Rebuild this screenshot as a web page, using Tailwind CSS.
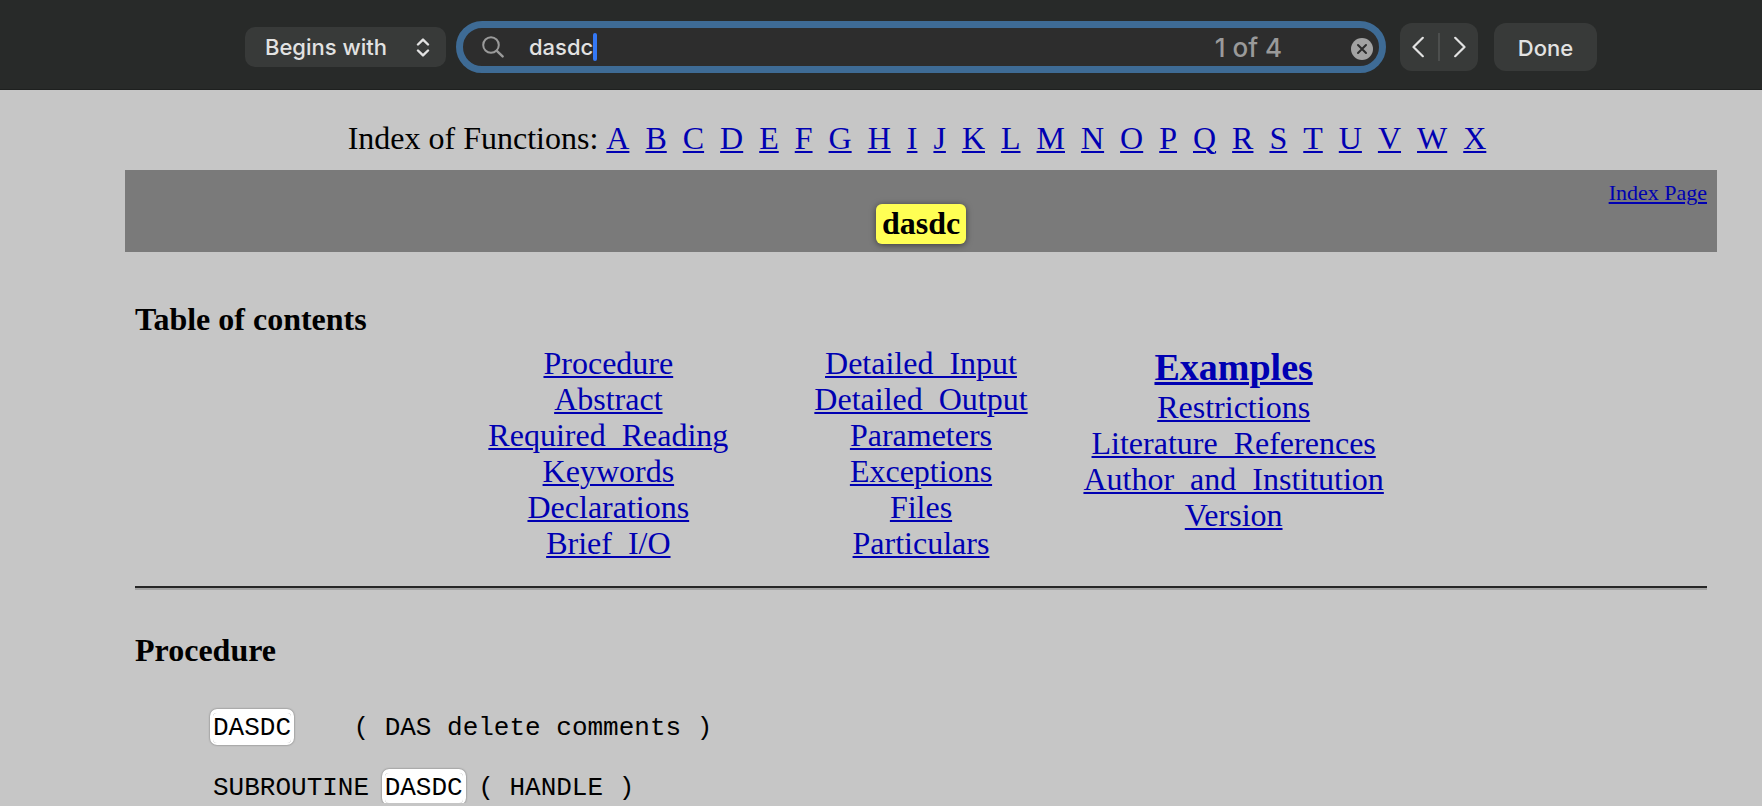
<!DOCTYPE html>
<html lang="en">
<head>
    <meta charset="UTF-8">
    <meta name="viewport" content="width=device-width, initial-scale=1.0">
    <title>dasdc</title>
    <!-- Tailwind CSS -->
    <script src="https://cdn.jsdelivr.net/npm/@tailwindcss/browser@4"></script>
</head>
<body class="bg-[#c6c6c6] text-black font-['Liberation_Serif',serif] text-[32px] leading-9 overflow-x-hidden">

    <!-- Find bar -->
    <header class="flex items-center h-[90px] pl-[245px] pr-[165px] pt-[5px] bg-[#282a29] border-b border-[#1e201f] font-[Inter,sans-serif] font-medium text-[22px] leading-7 text-[#e2e2e2]">
        <div class="relative w-[201px] h-10 mr-[10px]">
            <select aria-label="Match mode" class="appearance-none w-full h-full pl-5 rounded-[10px] bg-[#383a39]">
                <option>Begins with</option>
                <option>Contains</option>
            </select>
            <svg class="absolute right-4 top-[11px] w-[14px] h-[19px] pointer-events-none" viewBox="0 0 14 19" fill="none" stroke="#e2e2e2" stroke-width="2.4" stroke-linecap="round" stroke-linejoin="round">
                <path d="M2 6.5 7 1.6l5 4.9M2 12.5l5 4.9 5-4.9"/>
            </svg>
        </div>

        <div class="flex flex-1 items-center h-[52px] mr-[14px] pl-[19px] pr-[6px] rounded-full border-[7px] border-[#3e6b95] bg-[#2d2d2d]">
            <svg class="w-[22px] h-[22px] shrink-0" viewBox="0 0 22 22" fill="none" stroke="#9a9a9a" stroke-width="2" stroke-linecap="round">
                <circle cx="9" cy="9" r="7.8"/>
                <path d="m14.8 14.8 5.8 5.6" stroke-width="2.4"/>
            </svg>
            <input type="text" value="dasdc" aria-label="Find on page" class="field-sizing-content ml-[25px] bg-transparent outline-none">
            <span class="w-1 h-7 rounded-xs bg-[#3478f6]"></span>
            <span class="ml-auto pt-[2px] text-[26px] text-[#9a9a9a]">1 of 4</span>
            <button type="button" aria-label="Clear" class="ml-[69px] mt-1">
                <svg class="block w-[22px] h-[22px]" viewBox="0 0 22 22">
                    <circle cx="11" cy="11" r="11" fill="#a2a2a2"/>
                    <path d="m7 7 8 8m0-8-8 8" stroke="#2d2d2d" stroke-width="2" stroke-linecap="round"/>
                </svg>
            </button>
        </div>

        <div class="flex items-center w-[78px] h-12 mr-4 rounded-[12px] bg-[#383a39]">
            <button type="button" aria-label="Previous" class="flex flex-1 h-full items-center justify-start pl-3">
                <svg class="w-3 h-[22px]" viewBox="0 0 12 22" fill="none" stroke="#e2e2e2" stroke-width="2.2" stroke-linecap="round" stroke-linejoin="round"><path d="M10.8 1.8 1.5 11l9.3 9.2"/></svg>
            </button>
            <span class="w-[2px] h-7 bg-[#4d4f4e]"></span>
            <button type="button" aria-label="Next" class="flex flex-1 h-full items-center justify-end pr-3">
                <svg class="w-3 h-[22px]" viewBox="0 0 12 22" fill="none" stroke="#e2e2e2" stroke-width="2.2" stroke-linecap="round" stroke-linejoin="round"><path d="m1.2 1.8 9.3 9.2-9.3 9.2"/></svg>
            </button>
        </div>
        <button type="button" class="w-[103px] h-12 pt-[2px] rounded-[12px] bg-[#383a39]">Done</button>
    </header>

    <main class="pl-[125px] pr-[45px] pt-[30px]">
        <!-- Alphabetical index -->
        <p class="text-center whitespace-nowrap mb-[14px] [font-kerning:none]">Index of Functions:
            <a href="#" class="text-[#0000b2] underline decoration-2 underline-offset-2">A</a>&nbsp;
            <a href="#" class="text-[#0000b2] underline decoration-2 underline-offset-2">B</a>&nbsp;
            <a href="#" class="text-[#0000b2] underline decoration-2 underline-offset-2">C</a>&nbsp;
            <a href="#" class="text-[#0000b2] underline decoration-2 underline-offset-2">D</a>&nbsp;
            <a href="#" class="text-[#0000b2] underline decoration-2 underline-offset-2">E</a>&nbsp;
            <a href="#" class="text-[#0000b2] underline decoration-2 underline-offset-2">F</a>&nbsp;
            <a href="#" class="text-[#0000b2] underline decoration-2 underline-offset-2">G</a>&nbsp;
            <a href="#" class="text-[#0000b2] underline decoration-2 underline-offset-2">H</a>&nbsp;
            <a href="#" class="text-[#0000b2] underline decoration-2 underline-offset-2">I</a>&nbsp;
            <a href="#" class="text-[#0000b2] underline decoration-2 underline-offset-2">J</a>&nbsp;
            <a href="#" class="text-[#0000b2] underline decoration-2 underline-offset-2">K</a>&nbsp;
            <a href="#" class="text-[#0000b2] underline decoration-2 underline-offset-2">L</a>&nbsp;
            <a href="#" class="text-[#0000b2] underline decoration-2 underline-offset-2">M</a>&nbsp;
            <a href="#" class="text-[#0000b2] underline decoration-2 underline-offset-2">N</a>&nbsp;
            <a href="#" class="text-[#0000b2] underline decoration-2 underline-offset-2">O</a>&nbsp;
            <a href="#" class="text-[#0000b2] underline decoration-2 underline-offset-2">P</a>&nbsp;
            <a href="#" class="text-[#0000b2] underline decoration-2 underline-offset-2">Q</a>&nbsp;
            <a href="#" class="text-[#0000b2] underline decoration-2 underline-offset-2">R</a>&nbsp;
            <a href="#" class="text-[#0000b2] underline decoration-2 underline-offset-2">S</a>&nbsp;
            <a href="#" class="text-[#0000b2] underline decoration-2 underline-offset-2">T</a>&nbsp;
            <a href="#" class="text-[#0000b2] underline decoration-2 underline-offset-2">U</a>&nbsp;
            <a href="#" class="text-[#0000b2] underline decoration-2 underline-offset-2">V</a>&nbsp;
            <a href="#" class="text-[#0000b2] underline decoration-2 underline-offset-2">W</a>&nbsp;
            <a href="#" class="text-[#0000b2] underline decoration-2 underline-offset-2">X</a>&nbsp;
        </p>

        <!-- Title band -->
        <div class="bg-[#7a7a7a] px-[10px] pt-[10px] pb-[11px]">
            <p class="text-right text-[22px] leading-[25px]"><a href="#" class="text-[#0000b2] underline decoration-2 underline-offset-2">Index Page</a></p>
            <h1 class="text-center font-bold"><mark class="px-[6px] pt-[1px] pb-[3px] rounded-[6px] bg-[#ffff54] text-black shadow-[0_1px_6px_rgba(0,0,0,0.5)]">dasdc</mark></h1>
        </div>

        <div class="px-[10px]">
            <h4 class="mt-[49px] mb-2 font-bold">Table of contents</h4>
            <nav class="grid grid-cols-3 w-[938px] max-w-full mx-auto text-center text-[#0000b2]">
                <ul>
                    <li><a href="#procedure" class="underline decoration-2 underline-offset-2">Procedure</a></li>
                    <li><a href="#" class="underline decoration-2 underline-offset-2">Abstract</a></li>
                    <li><a href="#" class="underline decoration-2 underline-offset-2">Required_Reading</a></li>
                    <li><a href="#" class="underline decoration-2 underline-offset-2">Keywords</a></li>
                    <li><a href="#" class="underline decoration-2 underline-offset-2">Declarations</a></li>
                    <li><a href="#" class="underline decoration-2 underline-offset-2">Brief_I/O</a></li>
                </ul>
                <ul>
                    <li><a href="#" class="underline decoration-2 underline-offset-2">Detailed_Input</a></li>
                    <li><a href="#" class="underline decoration-2 underline-offset-2">Detailed_Output</a></li>
                    <li><a href="#" class="underline decoration-2 underline-offset-2">Parameters</a></li>
                    <li><a href="#" class="underline decoration-2 underline-offset-2">Exceptions</a></li>
                    <li><a href="#" class="underline decoration-2 underline-offset-2">Files</a></li>
                    <li><a href="#" class="underline decoration-2 underline-offset-2">Particulars</a></li>
                </ul>
                <ul>
                    <li class="text-[38px] leading-[44px] font-bold"><a href="#" class="underline decoration-3 underline-offset-2">Examples</a></li>
                    <li><a href="#" class="underline decoration-2 underline-offset-2">Restrictions</a></li>
                    <li><a href="#" class="underline decoration-2 underline-offset-2">Literature_References</a></li>
                    <li><a href="#" class="underline decoration-2 underline-offset-2">Author_and_Institution</a></li>
                    <li><a href="#" class="underline decoration-2 underline-offset-2">Version</a></li>
                </ul>
            </nav>

            <hr class="mt-[25px] h-1 border-t-2 border-b-2 border-t-[#262626] border-b-[#a2a2a2]">

            <h4 id="procedure" class="mt-[42px] font-bold">Procedure</h4>
            <pre class="mt-[45px] font-['Liberation_Mono',monospace] text-[26px] leading-[30px]">     <mark class="rounded-[4px] bg-white text-black shadow-[0_-1px_0_3px_#fff,0_-1px_2px_3px_rgba(0,0,0,0.5)]">DASDC</mark>    ( DAS delete comments )

     SUBROUTINE <mark class="rounded-[4px] bg-white text-black shadow-[0_-1px_0_3px_#fff,0_-1px_2px_3px_rgba(0,0,0,0.5)]">DASDC</mark> ( HANDLE )</pre>
        </div>
    </main>
</body>
</html>
